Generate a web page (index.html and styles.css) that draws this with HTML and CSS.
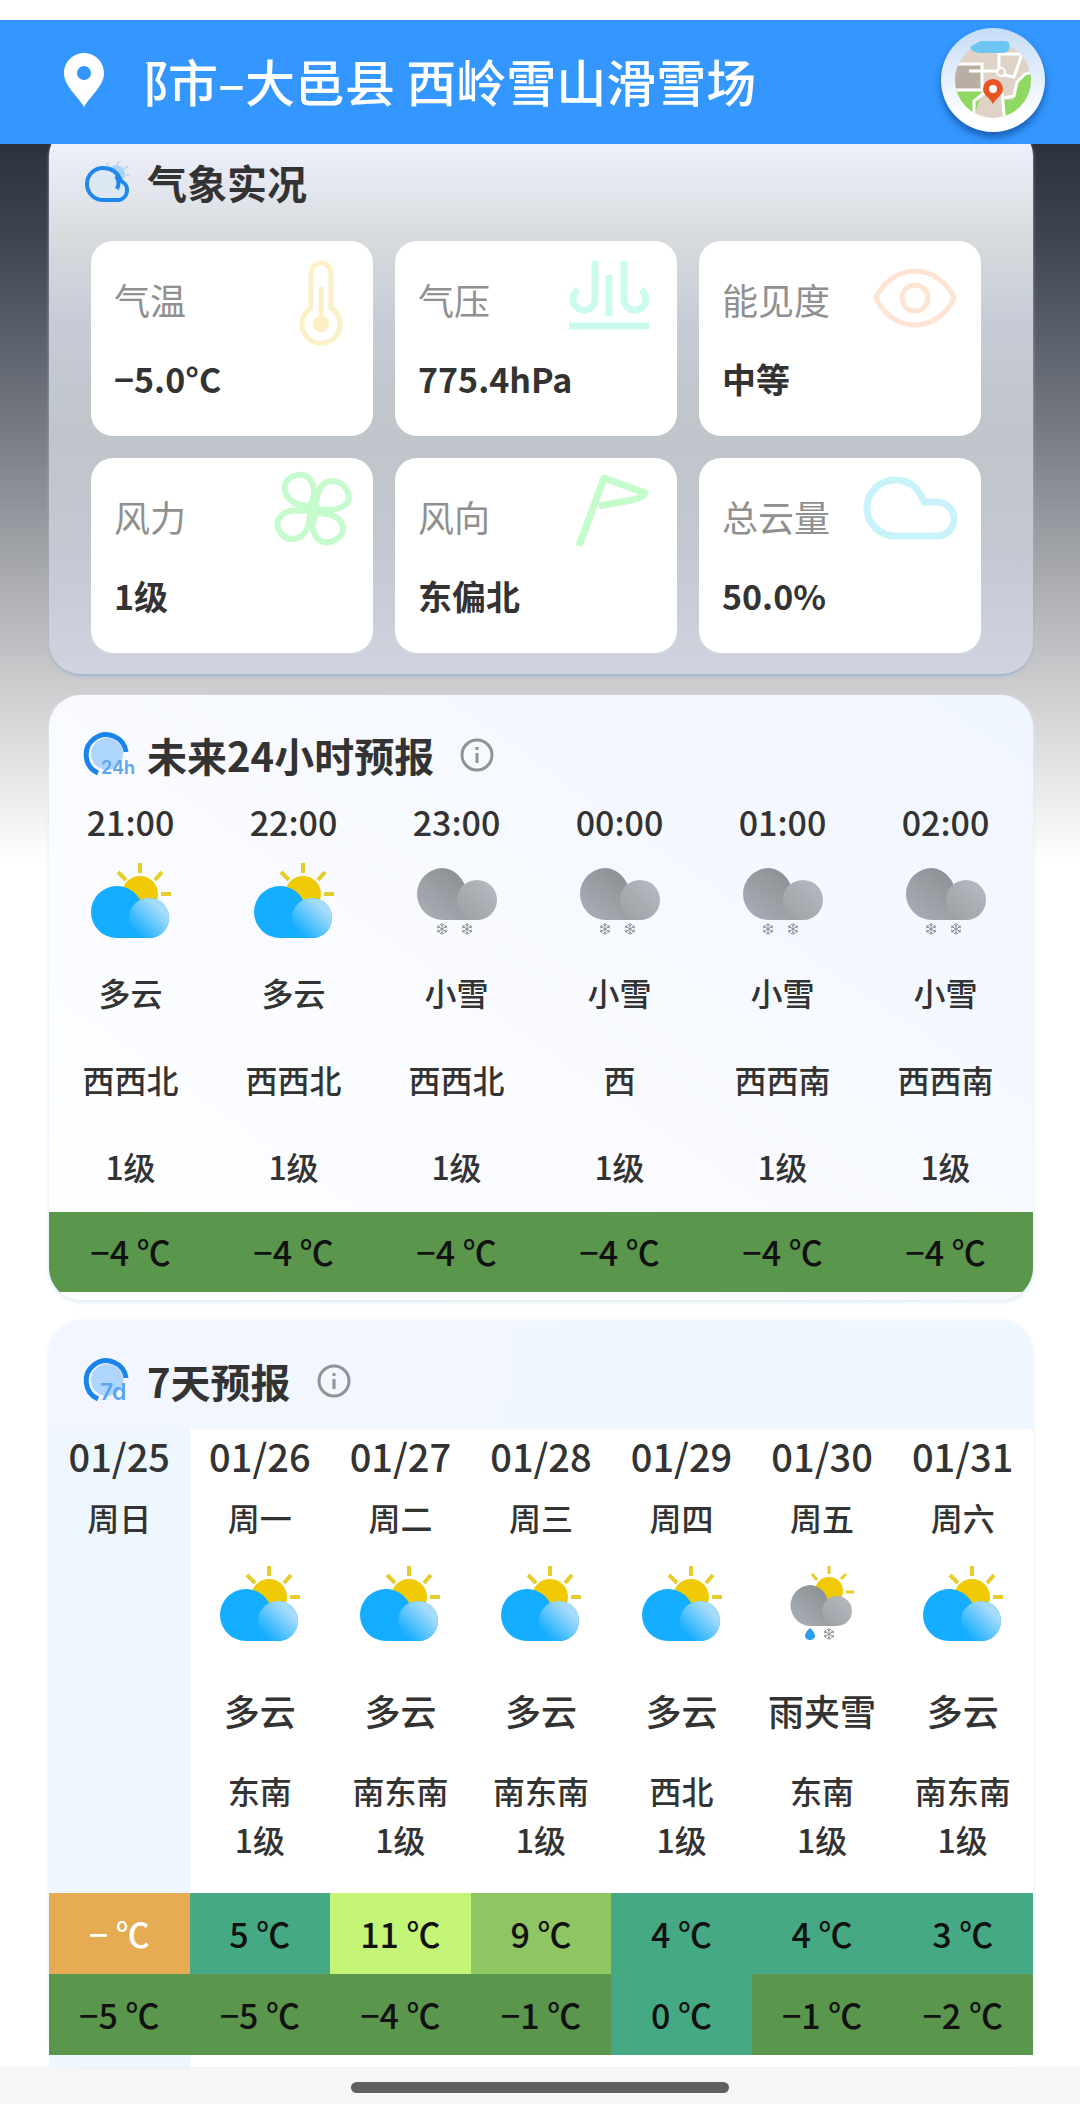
FILE: index.html
```html
<!DOCTYPE html>
<html lang="zh-CN">
<head>
  <meta charset="UTF-8">
  <meta name="viewport" content="width=device-width, initial-scale=1.0">
  <title>西岭雪山滑雪场</title>
  <link rel="stylesheet" href="styles.css">
</head>
<body>
  <!-- shared weather icons -->
  <svg class="defs" width="0" height="0" aria-hidden="true">
    <defs>
      <linearGradient id="blueCloud" x1="0" y1="1" x2="1" y2="0">
        <stop offset="0.15" stop-color="#14adff"/>
        <stop offset="0.75" stop-color="#a6dcfb"/>
      </linearGradient>
      <linearGradient id="grayBack" x1="0" y1="1" x2="1" y2="0">
        <stop offset="0" stop-color="#abb1b6"/>
        <stop offset="1" stop-color="#84898e"/>
      </linearGradient>
      <linearGradient id="grayFront" x1="0" y1="1" x2="1" y2="0">
        <stop offset="0" stop-color="#9aa0a5"/>
        <stop offset="1" stop-color="#b9bbc1"/>
      </linearGradient>
      <symbol id="flake" viewBox="0 0 14 14">
        <path d="M7 1v12M2 4l10 6M12 4L2 10M5 2l2 2 2-2M5 12l2-2 2 2M2 6l2-1V3M12 6l-2-1V3M2 8l2 1v2M12 8l-2 1v2" fill="none" stroke="#8e9194" stroke-width="1"/>
      </symbol>
      <symbol id="cloudy" viewBox="0 0 90 90">
        <circle cx="54" cy="43" r="18" fill="#f0ca05"/>
        <path d="M54 12v10M32 21l8 8M76 21l-7 8M75 43h10" stroke="#e6cd2c" stroke-width="4"/>
        <path d="M31 35a26 26 0 0 0 0 52h32a20 20 0 0 0 0-40L54 49A26 26 0 0 0 31 35z" fill="#14adff"/>
        <circle cx="63" cy="67" r="20" fill="url(#blueCloud)"/>
      </symbol>
      <symbol id="snow" viewBox="0 0 90 90">
        <path d="M31 17a26 26 0 0 0 0 52h34V48l-11-8A26 26 0 0 0 31 17z" fill="url(#grayBack)"/>
        <circle cx="65" cy="49" r="20" fill="url(#grayFront)"/>
        <use href="#flake" x="23" y="71" width="14" height="14"/>
        <use href="#flake" x="48" y="71" width="14" height="14"/>
      </symbol>
      <symbol id="sleet" viewBox="0 0 90 90">
        <circle cx="52" cy="37" r="14" fill="#f0ca05"/>
        <path d="M52 12v8M35 20l5 6M69 20l-5 5M69 38h8" stroke="#e6cd2c" stroke-width="3"/>
        <path d="M34 31a20 20 0 0 0 0 41h26V54l-9-7A20 20 0 0 0 34 31z" fill="url(#grayBack)"/>
        <circle cx="60" cy="57" r="15" fill="url(#grayFront)"/>
        <path d="M33 74c3 3 5 5 5 8a5 4 0 0 1-10 0c0-3 2-5 5-8z" fill="#2a9df0"/>
        <use href="#flake" x="45" y="73" width="14" height="14"/>
      </symbol>
    </defs>
  </svg>

  <header class="topbar">
    <svg class="pin" viewBox="0 0 40 54" aria-hidden="true">
      <path d="M20 0C9 0 0 9 0 20c0 13 13 22 20 34 7-12 20-21 20-34C40 9 31 0 20 0zm0 13a7 7 0 1 1 0 14 7 7 0 0 1 0-14z" fill="#fff" fill-rule="evenodd"/>
    </svg>
    <h1 class="place">都市–大邑县 西岭雪山滑雪场</h1>
    <button class="map-button" type="button" aria-label="地图">
      <svg viewBox="0 0 104 104" aria-hidden="true">
        <clipPath id="mapClip"><circle cx="52" cy="52" r="38"/></clipPath>
        <g clip-path="url(#mapClip)">
          <rect width="104" height="104" fill="#dfd3c7"/>
          <path d="M10 35h32v27H10z" fill="#b8aea2"/>
          <path d="M10 62h31l-8 28H10z" fill="#8fd861"/>
          <path d="M62 90V72h10l4-17 7-9 20-4v50z" fill="#8fd861"/>
          <path d="M10 36h31v26H10M28 43h30M33 90V73l10-8h18l3 30M62 70l11-2 3-14 8-8 12-3M58 10v36M58 46l15 3 8-23H58" fill="none" stroke="#fff" stroke-width="3"/>
          <circle cx="60" cy="44" r="4" fill="#dfd3c7" stroke="#fff" stroke-width="2"/>
        </g>
        <path d="M30 18l10-5h24c7 0 6 12-2 12H40c-6 0-12-3-10-7z" fill="#6cc5f3"/>
        <path d="M52 51a10 10 0 0 0-10 10c0 6 6 8 10 15 4-7 10-9 10-15a10 10 0 0 0-10-10z" fill="#ea5424"/>
        <circle cx="52" cy="61" r="4" fill="#fff"/>
      </svg>
    </button>
  </header>

  <main class="page">
    <section class="card live">
      <div class="card-head">
        <svg class="head-icon" viewBox="0 0 48 44" aria-hidden="true">
          <circle cx="31" cy="14" r="9" fill="#acd3f7"/>
          <path d="M22 3l2 4M34 1l-2 4M43 6l-4 3M45 15h-4" stroke="#b9daf8" stroke-width="2"/>
          <path d="M18 8a16 16 0 0 0 0 32h16a10 10 0 0 0 2-19C33 13 27 8 18 8z" fill="#dde8f4" stroke="#2088ec" stroke-width="4"/>
          <path d="M31 16c3 4 3 9 1 13" fill="none" stroke="#2088ec" stroke-width="4"/>
        </svg>
        <h2>气象实况</h2>
      </div>
      <div class="tiles">
        <div class="tile">
          <div class="tile-top">
            <span>气温</span>
            <svg viewBox="0 0 96 96" fill="none" stroke="#fcf0c8" stroke-width="5" aria-hidden="true">
              <path d="M52 55V20a10 10 0 0 1 20 0v35a19 19 0 1 1-20 0z"/>
              <path d="M62 34v34"/>
              <circle cx="62" cy="71" r="6" fill="#fcf0c8"/>
            </svg>
          </div>
          <strong>−5.0°C</strong>
        </div>
        <div class="tile">
          <div class="tile-top">
            <span>气压</span>
            <svg viewBox="0 0 96 96" fill="none" stroke="#cbfbee" stroke-width="7" aria-hidden="true">
              <path d="M32 8v40a11 11 0 1 1-17-11M61 8v40a11 11 0 1 0 17-11M46 22v41"/>
              <path d="M6 73h80"/>
            </svg>
          </div>
          <strong>775.4hPa</strong>
        </div>
        <div class="tile">
          <div class="tile-top">
            <span>能见度</span>
            <svg viewBox="0 0 96 96" fill="none" stroke="#fde4d3" stroke-width="5" aria-hidden="true">
              <path d="M9 45C14 33 28 18 48 18s34 15 39 27C82 57 68 72 48 72S14 57 9 45z"/>
              <circle cx="48" cy="45" r="13"/>
            </svg>
          </div>
          <strong>中等</strong>
        </div>
        <div class="tile">
          <div class="tile-top">
            <span>风力</span>
            <svg viewBox="0 0 96 96" fill="none" stroke="#c6fccd" stroke-width="6" aria-hidden="true">
              <path d="M51 36C32 36 24 25 26 15s20-15 26-4 2 18-1 25z"/>
              <path d="M57 39c0-19 6-28 17-28s21 16 13 23-17 6-30 5z"/>
              <path d="M57 43c19 0 28 7 27 17s-19 17-26 8-4-15-1-25z"/>
              <path d="M51 41c0 19-7 28-18 28s-19-14-12-22 16-7 30-6z"/>
            </svg>
          </div>
          <strong>1级</strong>
        </div>
        <div class="tile">
          <div class="tile-top">
            <span>风向</span>
            <svg viewBox="0 0 96 96" fill="none" stroke="#c4fccb" stroke-width="7" stroke-linejoin="round" aria-hidden="true">
              <path d="M16 76L41 8l41 15c-2 8-30 9-46 13"/>
            </svg>
          </div>
          <strong>东偏北</strong>
        </div>
        <div class="tile">
          <div class="tile-top">
            <span>总云量</span>
            <svg viewBox="0 0 96 96" fill="none" stroke="#c9f3fb" stroke-width="7" aria-hidden="true">
              <path d="M28 10a28 28 0 0 0 0 56h42a17 17 0 0 0 0-34H57C52 20 45 10 28 10z"/>
            </svg>
          </div>
          <strong>50.0%</strong>
        </div>
      </div>
    </section>

    <section class="card hourly">
      <div class="card-head">
        <svg class="head-icon" viewBox="0 0 48 44" aria-hidden="true">
          <circle cx="22" cy="21" r="16" fill="#aed5fb"/>
          <path d="M13 40A20 20 0 1 1 41 19" fill="none" stroke="#1a84ea" stroke-width="5"/>
          <text x="16" y="41">24h</text>
        </svg>
        <h2>未来24小时预报</h2>
        <button class="info" type="button" aria-label="24小时预报说明">
          <svg viewBox="0 0 34 34" aria-hidden="true"><circle cx="17" cy="17" r="15"/><path d="M17 9v3M17 15v10"/></svg>
        </button>
      </div>
      <table>
        <thead>
          <tr class="time"><th>21:00</th><th>22:00</th><th>23:00</th><th>00:00</th><th>01:00</th><th>02:00</th></tr>
        </thead>
        <tbody>
          <tr class="icons">
            <td><svg><use href="#cloudy"/></svg></td>
            <td><svg><use href="#cloudy"/></svg></td>
            <td><svg><use href="#snow"/></svg></td>
            <td><svg><use href="#snow"/></svg></td>
            <td><svg><use href="#snow"/></svg></td>
            <td><svg><use href="#snow"/></svg></td>
          </tr>
          <tr class="text"><td>多云</td><td>多云</td><td>小雪</td><td>小雪</td><td>小雪</td><td>小雪</td></tr>
          <tr class="text"><td>西西北</td><td>西西北</td><td>西西北</td><td>西</td><td>西西南</td><td>西西南</td></tr>
          <tr class="text"><td>1级</td><td>1级</td><td>1级</td><td>1级</td><td>1级</td><td>1级</td></tr>
          <tr class="temp green"><td>−4 ℃</td><td>−4 ℃</td><td>−4 ℃</td><td>−4 ℃</td><td>−4 ℃</td><td>−4 ℃</td></tr>
        </tbody>
      </table>
    </section>

    <section class="card daily">
      <div class="card-head">
        <svg class="head-icon" viewBox="0 0 48 44" aria-hidden="true">
          <circle cx="22" cy="21" r="16" fill="#aed5fb"/>
          <path d="M13 40A20 20 0 1 1 41 19" fill="none" stroke="#1a84ea" stroke-width="5"/>
          <text class="wide" x="15" y="41">7d</text>
        </svg>
        <h2>7天预报</h2>
        <button class="info" type="button" aria-label="7天预报说明">
          <svg viewBox="0 0 34 34" aria-hidden="true"><circle cx="17" cy="17" r="15"/><path d="M17 9v3M17 15v10"/></svg>
        </button>
      </div>
      <table>
        <thead>
          <tr class="date"><th>01/25</th><th>01/26</th><th>01/27</th><th>01/28</th><th>01/29</th><th>01/30</th><th>01/31</th></tr>
        </thead>
        <tbody>
          <tr class="week"><td>周日</td><td>周一</td><td>周二</td><td>周三</td><td>周四</td><td>周五</td><td>周六</td></tr>
          <tr class="icons">
            <td></td>
            <td><svg><use href="#cloudy"/></svg></td>
            <td><svg><use href="#cloudy"/></svg></td>
            <td><svg><use href="#cloudy"/></svg></td>
            <td><svg><use href="#cloudy"/></svg></td>
            <td><svg><use href="#sleet"/></svg></td>
            <td><svg><use href="#cloudy"/></svg></td>
          </tr>
          <tr class="sky"><td></td><td>多云</td><td>多云</td><td>多云</td><td>多云</td><td>雨夹雪</td><td>多云</td></tr>
          <tr class="wind"><td></td><td>东南</td><td>南东南</td><td>南东南</td><td>西北</td><td>东南</td><td>南东南</td></tr>
          <tr class="level"><td></td><td>1级</td><td>1级</td><td>1级</td><td>1级</td><td>1级</td><td>1级</td></tr>
          <tr class="temp">
            <td class="orange">− ℃</td><td class="teal">5 ℃</td><td class="lime">11 ℃</td><td class="olive">9 ℃</td><td class="teal">4 ℃</td><td class="teal">4 ℃</td><td class="teal">3 ℃</td>
          </tr>
          <tr class="temp green">
            <td>−5 ℃</td><td>−5 ℃</td><td>−4 ℃</td><td>−1 ℃</td><td class="teal">0 ℃</td><td>−1 ℃</td><td>−2 ℃</td>
          </tr>
        </tbody>
        <tfoot>
          <tr><td></td><td colspan="6"></td></tr>
        </tfoot>
      </table>
    </section>
  </main>

  <footer class="gesture"><div class="handle"></div></footer>
</body>
</html>
```

FILE: styles.css
```css
* {
  box-sizing: border-box;
}
body {
  margin: 0;
  padding-top: 20px;
  background: #fff;
  color: #333;
  font-family: "Noto Sans CJK SC", sans-serif;
  font-weight: 500;
}
h1, h2 {
  margin: 0;
}
button {
  padding: 0;
  border: 0;
  background: none;
}
svg {
  display: block;
}
.defs {
  position: absolute;
}

/* top bar */
.topbar {
  position: relative;
  z-index: 1;
  display: flex;
  align-items: center;
  height: 124px;
  padding: 0 35px 4px 64px;
  background: #3397ff;
}
.pin {
  width: 40px;
  height: 54px;
}
.place {
  flex: 1;
  margin-left: 42px;
  overflow: hidden;
  color: #fff;
  font-size: 50px;
  font-weight: 500;
  line-height: 80px;
  text-indent: -28px;
  white-space: nowrap;
}
.map-button {
  width: 104px;
  height: 104px;
  border-radius: 50%;
  background: linear-gradient(#c5dcf6, #fff 85%);
  box-shadow: 0 5px 7px rgba(0, 40, 100, 0.5);
}

.page {
  display: flex;
  flex-direction: column;
  gap: 21px;
  padding: 0 47px 0 49px;
  background: linear-gradient(#2b323d 0, #3d444f 90px, #747982 280px, #a8aaae 430px, #cfcfd1 550px, #fff 720px);
}
.card {
  padding-top: 12px;
  border-radius: 32px;
}
.card-head {
  display: flex;
  align-items: center;
  height: 96px;
  padding-left: 36px;
}
.card-head h2 {
  margin-left: 14px;
  font-size: 40px;
  font-weight: 700;
  line-height: 60px;
}
.head-icon {
  width: 48px;
  height: 44px;
  overflow: visible;
}
.head-icon text {
  fill: #5aa5ee;
  font-family: Inter, sans-serif;
  font-size: 18px;
  font-weight: 600;
}
.head-icon .wide {
  font-size: 23px;
}
.info {
  margin-left: 26px;
}
.info svg {
  width: 34px;
  height: 34px;
  fill: none;
  stroke: #929292;
  stroke-width: 3;
}

/* live conditions */
.live {
  margin-top: -20px;
  padding-top: 10px;
  padding-bottom: 21px;
  background: linear-gradient(#f2f2fc 0, #eceef8 30px, #d8dcdf 110px, #c7cbd6 200px, #bfc5ca 310px, #c5c8d2 430px, #d1d3df 100%);
  box-shadow: 0 2px 3px #9db4cf;
}
.tiles {
  display: grid;
  grid-template-columns: repeat(3, 1fr);
  gap: 22px;
  padding: 11px 52px 0 42px;
}
.tile {
  padding: 12px 18px 27px 23px;
  border-radius: 22px;
  background: #fff;
}
.tile-top {
  display: flex;
  align-items: center;
  justify-content: space-between;
  height: 96px;
  color: #909090;
  font-size: 36px;
  font-weight: 400;
}
.tile-top span {
  padding-bottom: 4px;
}
.tile-top svg {
  width: 96px;
  height: 96px;
  overflow: visible;
}
.tile strong {
  display: block;
  font-size: 34px;
  line-height: 60px;
}

/* forecast tables */
table {
  width: 100%;
  table-layout: fixed;
  border-spacing: 0;
  text-align: center;
}
th, td {
  padding: 0;
  font-size: 32px;
  font-weight: 500;
  line-height: 38px;
}
.icons svg {
  width: 90px;
  height: 90px;
  margin: 0 auto;
}
.temp td {
  height: 80px;
  color: #111;
  font-size: 34px;
}
.hourly {
  padding-bottom: 8px;
  overflow: hidden;
  background: linear-gradient(215deg, #f0f6ff, #f8faff 50%, #fff);
  box-shadow: 0 2px 4px #d9eaf8;
}
.time th {
  width: 163px;
  height: 38px;
  font-size: 34px;
}
.time th:last-child {
  width: auto;
}
.hourly th:last-child, .hourly td:last-child {
  padding-right: 6px;
}
.hourly .icons td {
  height: 110px;
}
.text td {
  height: 87px;
  padding-bottom: 5px;
}
.daily {
  background: linear-gradient(100deg, #f3f6ff, #eef7ff);
  box-shadow: 0 0 4px #e0eefa;
}
.daily th, .daily td {
  background: #fff;
}
.daily th:first-child, .daily td:first-child {
  background: #eef6fe;
}
.date th {
  height: 56px;
  padding-bottom: 2px;
  font-size: 38px;
}
.week td {
  height: 66px;
  padding-bottom: 2px;
}
.daily .icons td {
  height: 113px;
  padding-top: 3px;
  vertical-align: top;
}
.sky td {
  height: 96px;
  padding-bottom: 5px;
  font-size: 36px;
}
.wind td {
  height: 60px;
}
.level td {
  height: 73px;
  vertical-align: top;
}
.daily .temp td {
  height: 81px;
}
tfoot td {
  height: 12px;
}

/* temperature colours */
.green td, .daily .green td, .daily .green td:first-child {
  background: #5a974d;
}
.daily .temp .teal {
  background: #45aa83;
}
.daily .temp .orange {
  background: #e5ac53;
  color: #fff;
}
.daily .temp .lime {
  background: #c4f577;
}
.daily .temp .olive {
  background: #90c563;
}

.gesture {
  padding: 15px 0 11px;
  background: #f6f6f6;
}
.handle {
  width: 35%;
  height: 11px;
  margin: 0 auto;
  border-radius: 6px;
  background: #606060;
}
```
